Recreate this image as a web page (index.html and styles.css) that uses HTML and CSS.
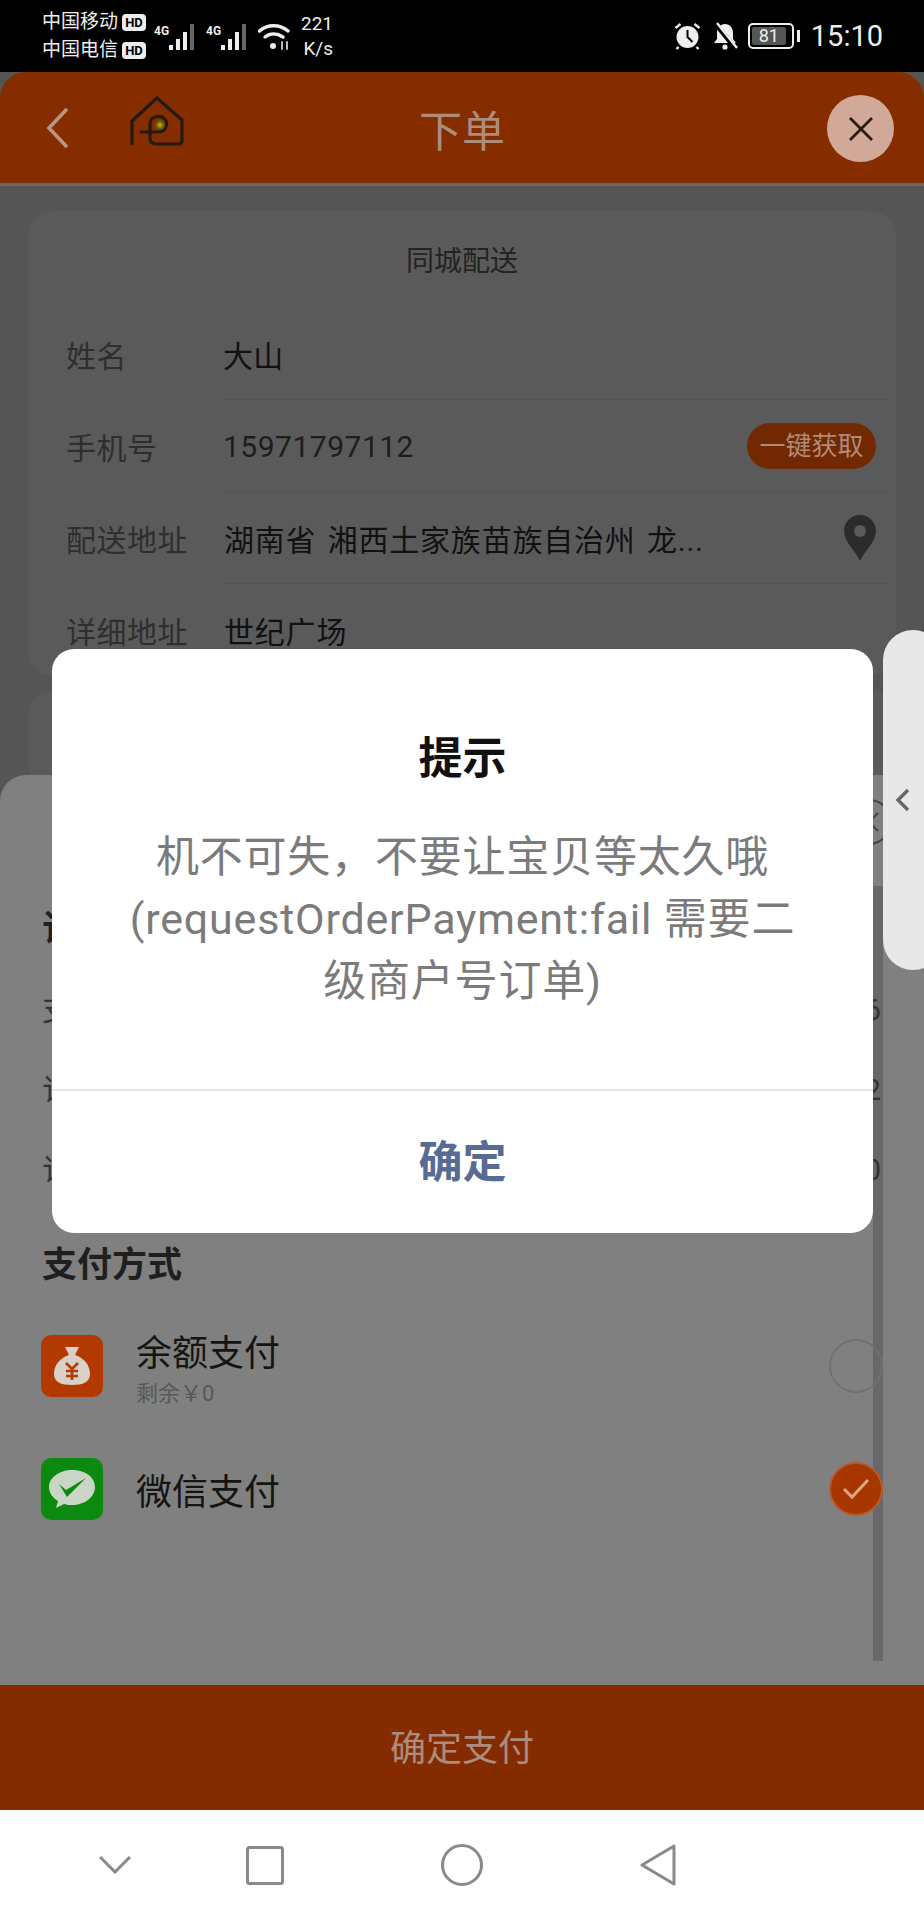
FILE: index.html
```html
<!DOCTYPE html>
<html lang="zh">
<head>
<meta charset="utf-8">
<title>下单</title>
<link rel="stylesheet" href="styles.css">
</head>
<body>
<div class="page">

  <div class="status">
    <div class="carriers">
      <div class="carrier">中国移动<span class="hd">HD</span></div>
      <div class="carrier">中国电信<span class="hd">HD</span></div>
    </div>
    <div class="net"><span class="four">4G</span>
      <svg width="27" height="26" viewBox="0 0 27 26"><rect x="0" y="21" width="4" height="5" fill="#eee"/><rect x="7" y="15" width="4" height="11" fill="#eee"/><rect x="14" y="8" width="4" height="18" fill="#eee"/><rect x="21" y="0" width="4" height="26" fill="#666"/></svg>
    </div>
    <div class="net"><span class="four">4G</span>
      <svg width="27" height="26" viewBox="0 0 27 26"><rect x="0" y="21" width="4" height="5" fill="#eee"/><rect x="7" y="15" width="4" height="11" fill="#eee"/><rect x="14" y="8" width="4" height="18" fill="#eee"/><rect x="21" y="0" width="4" height="26" fill="#666"/></svg>
    </div>
    <svg class="wifi" width="32" height="28" viewBox="0 0 32 28" fill="none" stroke="#eee" stroke-width="3.4" stroke-linecap="round"><path d="M1.5 8C9 1 22 1 30 8"/><path d="M7 14c5-4 12-4 18 0"/><circle cx="15" cy="23" r="3" fill="#eee" stroke="none"/><path d="M24 19v7M29 19v7" stroke-width="2" stroke="#bbb"/></svg>
    <div class="speed">221<br>K/s</div>
    <div class="status-right">
      <svg width="29" height="28" viewBox="0 0 28 28"><circle cx="14" cy="15" r="11" fill="#eee"/><path d="M14 8v7l5 5" fill="none" stroke="#000" stroke-width="2"/><path d="M2 6l5-4M26 6l-5-4M5 25l-2 2M23 25l2 2" stroke="#eee" stroke-width="2.4"/></svg>
      <svg width="26" height="28" viewBox="0 0 26 28"><path d="M13 2c-5 0-8 4-8 9v6l-3 4h22l-3-4v-6c0-5-3-9-8-9z" fill="#eee"/><circle cx="13" cy="25" r="2.6" fill="#eee"/><path d="M3 1l21 26" stroke="#000" stroke-width="5"/><path d="M5 1l20 25" stroke="#eee" stroke-width="2.4"/></svg>
      <div class="battery"><span class="level">81</span></div>
      <span class="tip"></span>
      <span class="clock">15:10</span>
    </div>
  </div>

  <div class="head">
    <svg class="back" width="24" height="42" viewBox="0 0 24 42" fill="none" stroke="#b89585" stroke-width="3.6"><path d="M21 2L3 21l18 19"/></svg>
    <svg class="home" width="54" height="52" viewBox="0 0 54 52" fill="none" stroke="#241a14" stroke-width="3.2" stroke-linecap="round" stroke-linejoin="round"><path d="M2 48V25L27 2l25 22v21q0 3-3 3H26q-6 0-6-6V28c0-9 13-10 16-3 2 6-2 11-8 11H11"/><circle cx="30" cy="29" r="5" fill="#6d5a08" stroke="none"/><circle cx="30" cy="29" r="2.6" fill="#a59a12" stroke="none"/></svg>
    <div class="head-title">下单</div>
    <div class="close">
      <svg width="26" height="26" viewBox="0 0 26 26" stroke="#2a1a12" stroke-width="2.8"><path d="M2 2l22 22M24 2L2 24"/></svg>
    </div>
  </div>

  <div class="content">
    <div class="card">
      <div class="card-title">同城配送</div>
      <div class="row"><span class="label">姓名</span><span class="value">大山</span></div>
      <div class="row"><span class="label">手机号</span><span class="value phone">15971797112</span><span class="chip">一键获取</span></div>
      <div class="row"><span class="label">配送地址</span><span class="value addr">湖南省 湘西土家族苗族自治州 龙...</span>
        <svg class="pin" width="32" height="46" viewBox="0 0 32 46"><path fill-rule="evenodd" fill="#2b2b2b" d="M16 0C7 0 0 7 0 16c0 11 12 20 16 30 4-10 16-19 16-30C32 7 25 0 16 0zm0 10a6 6 0 1 1 0 12 6 6 0 0 1 0-12z"/></svg>
      </div>
      <div class="row"><span class="label">详细地址</span><span class="value addr">世纪广场</span></div>
    </div>
    <div class="card second"></div>
  </div>

  <div class="sheet">
    <div class="sheet-close">
      <svg width="46" height="46" viewBox="0 0 46 46" fill="none" stroke="#444" stroke-width="2"><circle cx="23" cy="23" r="22"/><path d="M14 14l18 18M32 14L14 32"/></svg>
    </div>
    <div class="bar"></div>
    <div class="sheet-body">
      <div class="sheet-title">订</div>
      <div class="info"><span>支</span><span>6</span></div>
      <div class="info"><span>订</span><span>2</span></div>
      <div class="info"><span>订</span><span>0</span></div>
      <div class="sheet-title pay-title">支付方式</div>
      <div class="pay">
        <div class="pay-icon balance">
          <svg width="46" height="46" viewBox="0 0 46 46"><path fill="#d9d0c8" d="M16 4h14l-4 8c9 3 15 10 15 19 0 8-7 11-18 11S5 39 5 31c0-9 6-16 15-19z"/><path d="M17 20l6 6 6-6M23 26v11M17 28h12M17 33h12" fill="none" stroke="#b03a00" stroke-width="2.6"/></svg>
        </div>
        <div class="pay-text">
          <div class="pay-name">余额支付</div>
          <div class="pay-sub">剩余￥0</div>
        </div>
        <div class="radio"></div>
      </div>
      <div class="pay">
        <div class="pay-icon wechat">
          <svg width="48" height="44" viewBox="0 0 48 44"><path fill="#c9d6c6" d="M24 3C11 3 1 11 1 20c0 6 4 11 9 14l-2 7 8-4c3 1 5 1 8 1 13 0 23-8 23-18S37 3 24 3z"/><path d="M11 17l7 6 20-12-19 19z" fill="#0c8a10"/></svg>
        </div>
        <div class="pay-text"><div class="pay-name">微信支付</div></div>
        <div class="radio on">
          <svg width="28" height="22" viewBox="0 0 28 22" fill="none" stroke="#e0a684" stroke-width="3"><path d="M2 11l8 8L26 2"/></svg>
        </div>
      </div>
    </div>
  </div>

  <div class="paybtn">确定支付</div>

  <div class="nav">
    <svg width="32" height="18" viewBox="0 0 32 18" fill="none" stroke="#8a8a8a" stroke-width="3"><path d="M1 1l15 15L31 1"/></svg>
    <svg width="38" height="39" viewBox="0 0 38 39" fill="none" stroke="#8a8a8a" stroke-width="3"><rect x="1.5" y="1.5" width="35" height="36" rx="2"/></svg>
    <svg width="42" height="42" viewBox="0 0 42 42" fill="none" stroke="#8a8a8a" stroke-width="3"><circle cx="21" cy="21" r="19.5"/></svg>
    <svg width="36" height="42" viewBox="0 0 36 42" fill="none" stroke="#8a8a8a" stroke-width="3" stroke-linejoin="round"><path d="M34 2v38L2 21z"/></svg>
  </div>

  <div class="side">
    <svg width="15" height="24" viewBox="0 0 15 24" fill="none" stroke="#666" stroke-width="3.4"><path d="M13 2L3 12l10 10"/></svg>
  </div>

  <div class="modal">
    <div class="modal-main">
      <div class="modal-title">提示</div>
      <div class="modal-text">机不可失，不要让宝贝等太久哦(requestOrderPayment:fail 需要二级商户号订单)</div>
    </div>
    <div class="modal-btn">确定</div>
  </div>

</div>
</body>
</html>
```

FILE: styles.css
```css
* { box-sizing: border-box; }

html, body { margin: 0; padding: 0; }

body {
  background: #000;
  font-family: Roboto, "Noto Sans CJK SC", sans-serif;
}

.page {
  position: relative;
  width: 924px;
  height: 1920px;
  overflow: hidden;
  display: flex;
  flex-direction: column;
  background: #555;
}

/* status bar */
.status {
  height: 72px;
  flex: none;
  background: #000;
  color: #eee;
  display: flex;
  align-items: center;
  padding-left: 42px;
}

.carrier {
  font-size: 19px;
  line-height: 28px;
  display: flex;
  align-items: center;
  width: 112px;
}

.hd {
  margin-left: 4px;
  width: 24px;
  height: 17px;
  border-radius: 4px;
  background: #eee;
  color: #000;
  font-size: 13px;
  font-weight: 700;
  line-height: 17px;
  text-align: center;
}

.net {
  display: flex;
  align-items: flex-end;
  height: 26px;
  width: 52px;
  margin-top: 2px;
}

.four {
  width: 15px;
  font-size: 12px;
  font-weight: 700;
  line-height: 12px;
  align-self: flex-start;
  margin-top: 1px;
}

.wifi { margin-top: 2px; }

.speed {
  margin-left: 11px;
  width: 32px;
  font-size: 19px;
  line-height: 25px;
  text-align: right;
}

.status-right {
  margin-left: auto;
  padding-right: 41px;
  display: flex;
  align-items: center;
  gap: 10px;
}

.battery {
  width: 46px;
  height: 26px;
  border: 2px solid #eee;
  border-radius: 5px;
  padding: 2px;
}

.level {
  display: block;
  width: 34px;
  height: 18px;
  background: #555;
  color: #eee;
  font-size: 18px;
  line-height: 18px;
  text-align: center;
  border-radius: 2px;
}

.tip {
  width: 3px;
  height: 12px;
  background: #eee;
  margin-left: -7px;
}

.clock {
  font-size: 29px;
  margin-left: 1px;
}

/* header */
.head {
  height: 114px;
  flex: none;
  position: relative;
  display: flex;
  align-items: center;
  justify-content: center;
  background: #862d00;
  border-radius: 26px 26px 0 0;
  border-bottom: 3px solid #686868;
}

.back {
  position: absolute;
  left: 46px;
  top: 35px;
}

.home {
  position: absolute;
  left: 130px;
  top: 24px;
}

.head-title {
  font-size: 43px;
  color: #ad8c7c;
}

.close {
  position: absolute;
  right: 30px;
  top: 23px;
  width: 67px;
  height: 67px;
  border-radius: 50%;
  background: #d0a999;
  display: flex;
  align-items: center;
  justify-content: center;
}

/* order cards */
.content {
  flex: 1;
  min-height: 0;
  padding: 25px 28px 0;
}

.card {
  height: 465px;
  background: #5a5a5a;
  border-radius: 26px;
  padding: 0 6px 0 38px;
}

.second {
  height: 100px;
  margin-top: 14px;
}

.card-title {
  height: 97px;
  padding-top: 9px;
  margin: 0 -6px 0 -38px;
  font-size: 28px;
  line-height: 84px;
  color: #232323;
  text-align: center;
}

.row {
  height: 92px;
  display: flex;
  align-items: center;
  padding-right: 14px;
  position: relative;
  font-size: 30px;
}

.row::after {
  content: "";
  position: absolute;
  left: 158px;
  right: 0;
  bottom: 0;
  height: 1px;
  background: #525252;
}

.label {
  width: 157px;
  flex: none;
  color: #2e2e2e;
  letter-spacing: .5px;
}

.value {
  flex: 1;
  color: #111;
  letter-spacing: .3px;
}

.addr {
  margin-left: 1px;
  letter-spacing: .8px;
  word-spacing: 3px;
}

.phone {
  color: #1d1d1d;
  letter-spacing: .5px;
}

.chip {
  width: 129px;
  height: 46px;
  border-radius: 23px;
  background: #722800;
  color: #b08a78;
  font-size: 26px;
  line-height: 46px;
  text-align: center;
}

/* payment sheet */
.sheet {
  position: absolute;
  left: 0;
  right: 0;
  top: 775px;
  height: 911px;
  background: #808080;
  border-radius: 26px 26px 0 0;
}

.sheet-close {
  position: absolute;
  right: 32px;
  top: 24px;
}

.bar {
  position: absolute;
  left: 873px;
  top: 111px;
  bottom: 25px;
  width: 10px;
  background: #686868;
}

.sheet-body {
  padding: 131px 41px 0 41px;
  position: relative;
}

.sheet-title {
  font-size: 35px;
  font-weight: 700;
  line-height: 48px;
  color: #1f1f1f;
  margin: 0 0 10px 1px;
}

.info {
  display: flex;
  justify-content: space-between;
  height: 80px;
  padding: 26px 2px 0 1px;
  font-size: 30px;
  line-height: 40px;
  color: #333;
}

.sheet-title.pay-title {
  margin-top: 38px;
  margin-bottom: 14px;
}

.pay {
  height: 123px;
  display: flex;
  align-items: center;
}

.pay-icon {
  width: 62px;
  height: 62px;
  border-radius: 10px;
  margin-right: 33px;
  display: flex;
  align-items: center;
  justify-content: center;
  flex: none;
}

.balance { background: #b23a00; }
.wechat { background: #0c8a10; }

.pay-text { padding-top: 8px; }

.pay-name {
  font-size: 36px;
  line-height: 46px;
  color: #141414;
}

.pay-sub {
  margin-top: 3px;
  font-size: 22px;
  line-height: 28px;
  color: #585858;
}

.radio {
  margin-left: auto;
  width: 54px;
  height: 54px;
  border: 2px solid #707070;
  border-radius: 50%;
  display: flex;
  align-items: center;
  justify-content: center;
}

.radio.on {
  background: #a83600;
  border-color: #b85a30;
}

/* bottom */
.paybtn {
  height: 125px;
  flex: none;
  z-index: 1;
  background: #842b00;
  color: #ab8c7e;
  font-size: 36px;
  line-height: 129px;
  text-align: center;
}

.nav {
  height: 110px;
  flex: none;
  z-index: 1;
  background: #fff;
  display: grid;
  grid-template-columns: 114px 186px 208px 184px;
  align-items: center;
  justify-items: center;
  padding-left: 58px;
}

.side {
  position: absolute;
  left: 883px;
  top: 630px;
  width: 60px;
  height: 340px;
  background: #e8e8e8;
  border-radius: 38px;
  padding: 158px 0 0 12px;
}

/* alert */
.modal {
  position: absolute;
  left: 52px;
  top: 649px;
  width: 821px;
  height: 584px;
  background: #fff;
  border-radius: 22px;
  display: flex;
  flex-direction: column;
}

.modal-main {
  flex: none;
  height: 442px;
  border-bottom: 2px solid #e4e4e4;
  padding: 77px 70px 0;
  text-align: center;
}

.modal-title {
  font-size: 44px;
  font-weight: 700;
  line-height: 66px;
  color: #111;
}

.modal-text {
  margin-top: 34px;
  font-size: 43px;
  line-height: 62px;
  letter-spacing: .8px;
  color: #7b7b7b;
}

.modal-btn {
  height: 142px;
  font-size: 44px;
  font-weight: 700;
  line-height: 144px;
  color: #576b95;
  text-align: center;
}
```
